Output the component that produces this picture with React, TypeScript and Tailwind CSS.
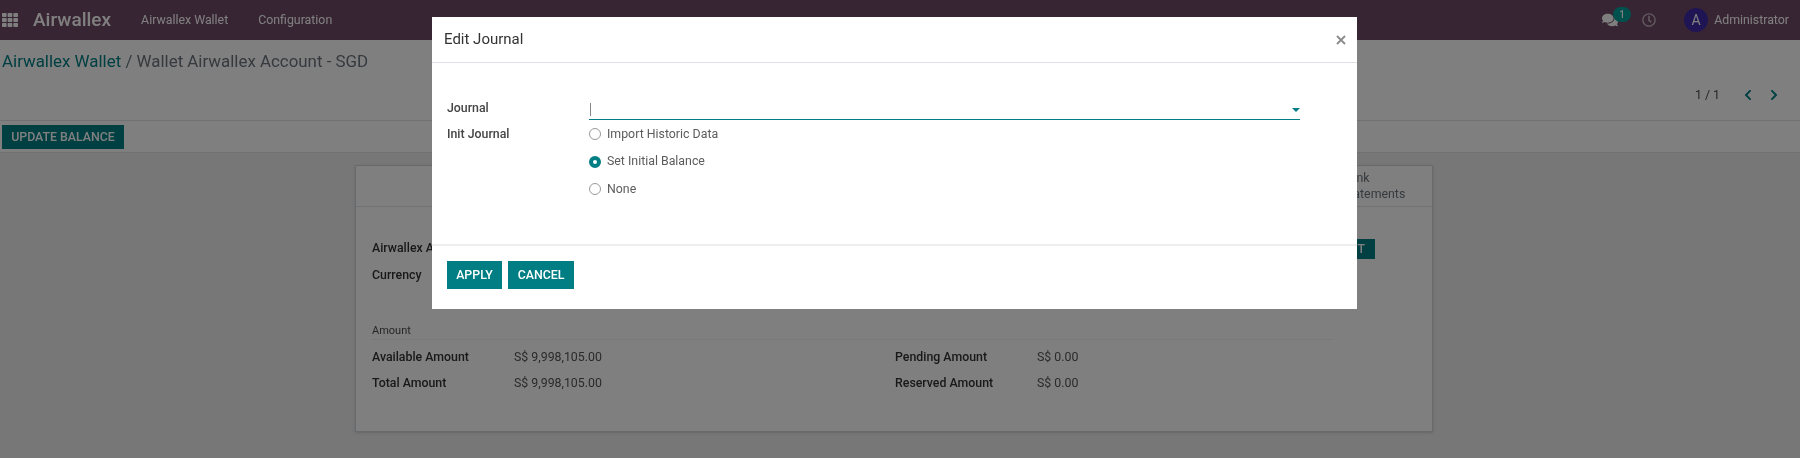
import React from 'react';
import { FaChevronLeft, FaChevronRight, FaComments, FaRegClock, FaTh } from 'react-icons/fa';

const Radio = ({ label, checked }: { label: string; checked?: boolean }) => (
  <div className="flex items-center gap-[6px] h-[27.5px]">
    {checked ? (
      <span className="w-[12px] h-[12px] rounded-full border-[4px] border-[#017e84] bg-white" />
    ) : (
      <span className="w-[12px] h-[12px] rounded-full border border-[#9a9a9a] bg-white" />
    )}
    <span className="text-[#5c5c5c]">{label}</span>
  </div>
);

const AmountRow = ({ label, value }: { label: string; value: string }) => (
  <div className="flex items-center h-[26px]">
    <span className="w-[142px] font-medium text-[#333333]">{label}</span>
    <span className="text-[#555555]">{value}</span>
  </div>
);

export default function App() {
  return (
    <div className="relative w-[1800px] h-[458px] overflow-hidden bg-[#f0eeee] text-[12.35px] text-[#4c4c4c] font-['Roboto',sans-serif] blur-[0.5px]">
      {/* top bar */}
      <div className="flex items-center justify-between h-[40px] bg-[#714b67] text-white pl-[2px] pr-[11px]">
        <div className="flex items-center">
          <FaTh size={16} />
          <span className="ml-[15px] text-[19px] font-medium">Airwallex</span>
          <span className="ml-[30px]">Airwallex Wallet</span>
          <span className="ml-[30px]">Configuration</span>
        </div>
        <div className="flex items-center">
          <div className="relative mr-[24px]">
            <FaComments size={16} />
            <span className="absolute -top-[5px] left-[11px] w-[18px] h-[15px] rounded-full bg-[#00a09d] text-[10px] font-medium text-center leading-[15px]">
              1
            </span>
          </div>
          <FaRegClock size={14} className="mr-[28px] opacity-60" />
          <span className="w-[24px] h-[24px] rounded-full bg-[#3f2ba8] text-[14px] text-center leading-[24px] mr-[6px]">
            A
          </span>
          <span>Administrator</span>
        </div>
      </div>

      {/* control panel */}
      <div className="bg-white border-b border-[#dee2e6] h-[113px]">
        <div className="h-[81px] border-b border-[#dee2e6]">
          <div className="pl-[2px] pt-[10px] text-[16.9px] leading-[22px]">
            <span className="text-[#017e84]">Airwallex Wallet</span>
            <span className="text-[#6c757d]"> / Wallet Airwallex Account - SGD</span>
          </div>
          <div className="flex items-center justify-end pr-[20px] mt-[14px]">
            <span className="mr-[22px]">1 / 1</span>
            <FaChevronLeft size={12} className="text-[#017e84]" />
            <FaChevronRight size={12} className="ml-[14px] text-[#017e84]" />
          </div>
        </div>
        <div className="pl-[2px] pt-[4px]">
          <button className="h-[24px] w-[122px] bg-[#017e84] text-white text-[12.35px] font-medium">UPDATE BALANCE</button>
        </div>
      </div>

      {/* form sheet */}
      <div className="ml-[355px] mt-[12px] w-[1078px] h-[267px] bg-white border border-[#ced4da] shadow-sm">
        <div className="flex justify-end h-[41px] border-b border-[#dee2e6]">
          <div className="w-[90px] pt-[4px] leading-[16px] text-[#6c757d]">
            Bank
            <br />
            Statements
          </div>
        </div>
        <div className="px-[16px] pt-[32px]">
          <div className="flex justify-between items-start h-[27px]">
            <span className="font-medium text-[#333333]">Airwallex Account</span>
            <button className="h-[20px] mr-[41px] px-[10px] bg-[#017e84] text-white text-[12.35px] font-medium">
              UPDATE ACCOUNT
            </button>
          </div>
          <div className="h-[58px] font-medium text-[#333333]">Currency</div>
          <div className="text-[11px] leading-[14px] border-b border-[#f0f0f0] pb-[1px] mr-[83px]">Amount</div>
          <div className="flex mt-[4.5px]">
            <div className="w-[523px]">
              <AmountRow label="Available Amount" value="S$ 9,998,105.00" />
              <AmountRow label="Total Amount" value="S$ 9,998,105.00" />
            </div>
            <div>
              <AmountRow label="Pending Amount" value="S$ 0.00" />
              <AmountRow label="Reserved Amount" value="S$ 0.00" />
            </div>
          </div>
        </div>
      </div>

      {/* modal */}
      <div className="absolute inset-0 bg-black/50" />
      <div className="absolute left-[432px] top-[17px] w-[925px] h-[292px] bg-white flex flex-col">
        <div className="flex items-center justify-between h-[46px] pl-[12px] pr-[11px] border-b border-[#dee2e6]">
          <span className="text-[15px] text-[#333333]">Edit Journal</span>
          <svg width="10" height="10" viewBox="0 0 10 10" stroke="#8a8a8a" strokeWidth="1.8">
            <path d="M1 1l8 8M9 1 1 9" />
          </svg>
        </div>
        <div className="flex-1 pl-[15px] pt-[36px]">
          <div className="flex h-[21px]">
            <span className="w-[142px] font-medium text-[#444444] leading-[18px]">Journal</span>
            <div className="relative w-[711px] border-b border-[#017e84] h-[21px]">
              <span className="absolute left-[1px] top-[4px] w-px h-[13px] bg-[#888888]" />
              <span className="absolute right-[0px] top-[9px] border-x-[4px] border-x-transparent border-t-[4px] border-t-[#017e84]" />
            </div>
          </div>
          <div className="flex">
            <span className="w-[142px] font-medium text-[#444444] mt-[5px]">Init Journal</span>
            <div className="pt-[0.5px]">
              <Radio label="Import Historic Data" />
              <Radio label="Set Initial Balance" checked />
              <Radio label="None" />
            </div>
          </div>
        </div>
        <div className="flex gap-[6px] h-[65px] pl-[15px] pt-[15px] border-t-2 border-[#eeeeee]">
          <button className="h-[28px] w-[55px] bg-[#017e84] text-white text-[12.35px] font-medium">APPLY</button>
          <button className="h-[28px] w-[66px] bg-[#017e84] text-white text-[12.35px] font-medium">CANCEL</button>
        </div>
      </div>
    </div>
  );
}
